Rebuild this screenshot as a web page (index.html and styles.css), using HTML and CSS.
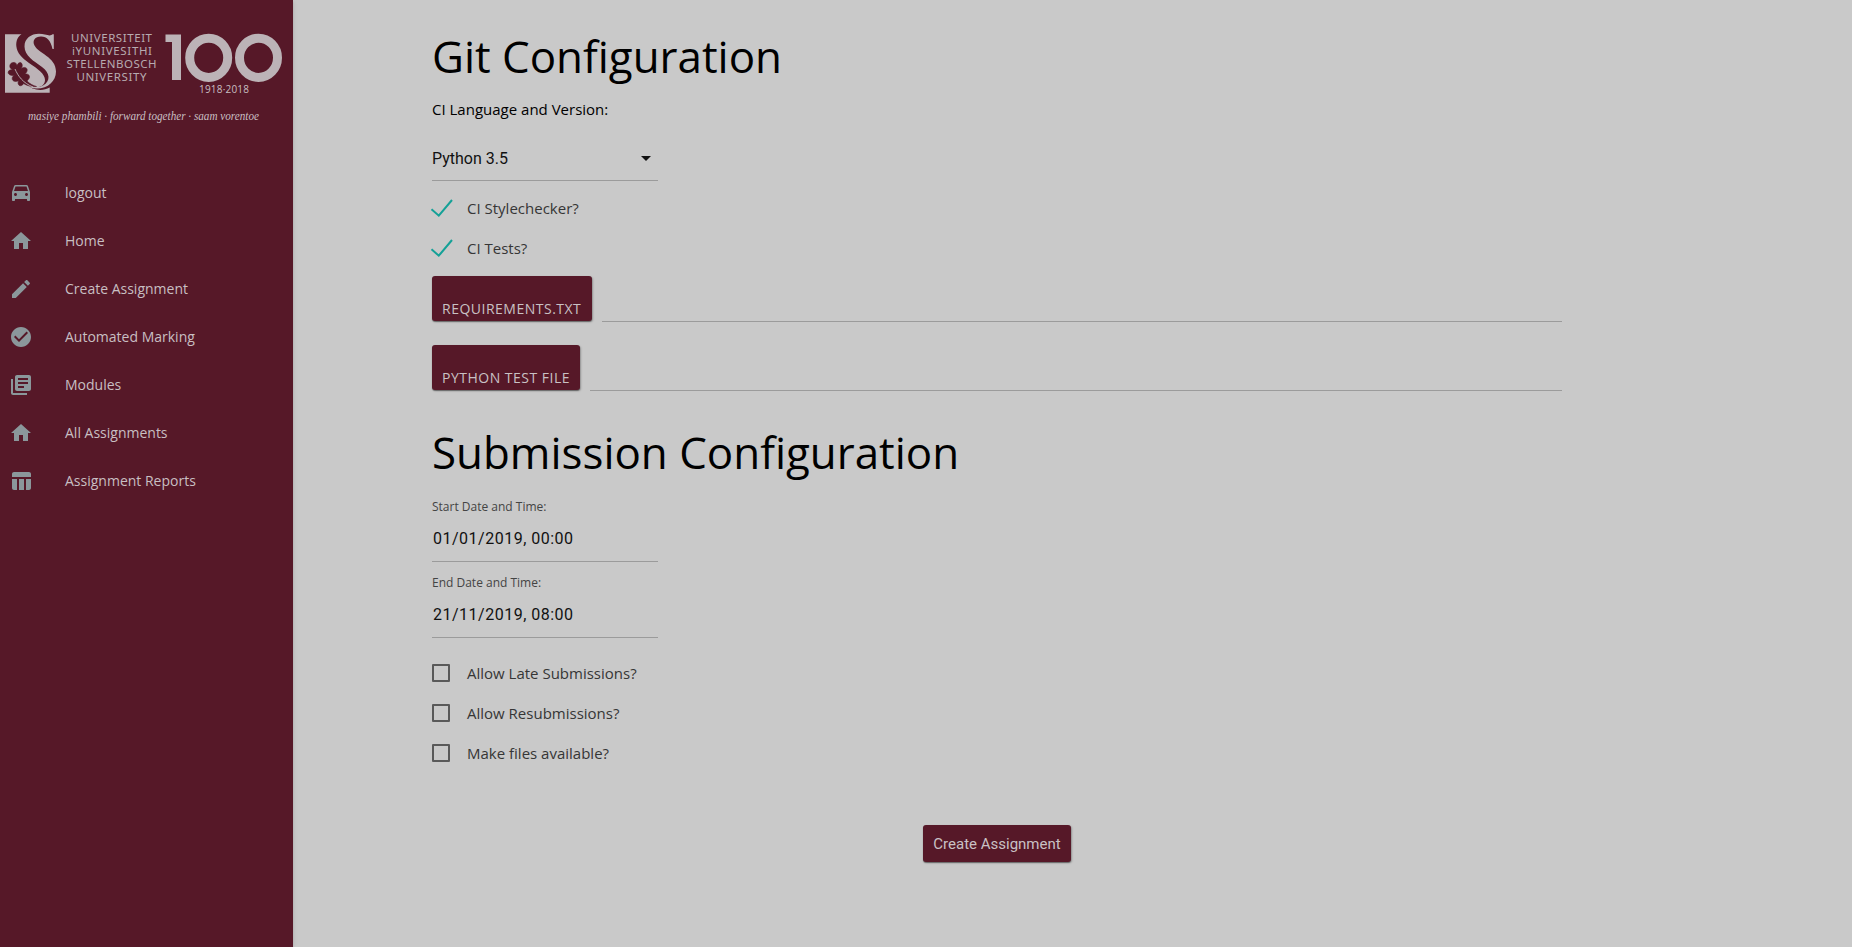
FILE: index.html
```
<!DOCTYPE html>
<html lang="en">
<head>
<meta charset="utf-8">
<title>Create Assignment</title>
<link rel="stylesheet" href="styles.css">
</head>
<body>
<div class="app">
  <aside class="sidebar">
    <svg class="logo" viewBox="0 0 293 169" role="img" aria-label="Stellenbosch University">
      <path class="mark" d="M5 34.300H21.500C17.500 37 16 41 16.300 46C17 53 22 58 29 63C38 69 45 74 45 80C45 83 43 86 39 87C34 88.500 29 86.500 26 84C32 90 42 92 49.700 87.500V92.700H5Z"/>
      <path class="mark" d="M53.800 34.300V49H52.500C51 41 47 36.500 41 36.500C35 36.500 32 40.500 34.500 45.500C38 53 56 57 56 71.500C56 81 48 88.500 37 88.500C32 88.500 28 87 25 84.500C31 87.500 38 88 43 85.500C51 81 50 73 42 67C34 61 24.500 56 24.500 46.500C24.500 38.500 31 33.800 39 33.800C45 33.800 50 37 52.500 34.300Z"/>
      <path class="leaf" d="M13 62.500c2.500-.5 3.500 1 4 3c1-3 4-4 5-1.500c.8 2-.3 3.500-.8 4.500c3-2 6-1 6 1.500c0 2-1.500 3-2.200 4c3.500-.5 5.500 2 4 4.500c-.8 1.300-1.500 1.700-2 2.500c3 3 6 4.500 9.500 5.500c-5 .5-10-1-13-3c-1 2.500-4 3-5 1c-.8-1.400-.3-2.700.2-3.700c-3 1.200-6.500.7-6.500-2.300c0-1.700 1-2.700 2.500-3c-3.500.5-7-1-6.500-3.500c.6-2.200 2.800-2.300 4.800-2.200c-3-1-4-3.500-2.500-5.800c1-1.200 1.700-1.300 2.500-1.500z"/>
      <path class="vein" d="M15 69C18 76 23 83 33 87"/>
      <g class="name">
        <text x="71" y="42" textLength="81">UNIVERSITEIT</text>
        <text x="72" y="55" textLength="80">iYUNIVESITHI</text>
        <text x="66.500" y="67.500" textLength="90">STELLENBOSCH</text>
        <text x="76.500" y="80.500" textLength="70">UNIVERSITY</text>
      </g>
      <path class="mark" d="M165.500 34.500H181V80H172V42H165.500Z"/>
      <ellipse class="zero" cx="208.700" cy="57.800" rx="19" ry="19.600"/>
      <ellipse class="zero" cx="258.500" cy="57.800" rx="19" ry="19.600"/>
      <text class="years" x="199" y="92.700" textLength="50">1918·2018</text>
      <text class="motto" x="28" y="120" textLength="231" lengthAdjust="spacingAndGlyphs">masiye phambili · forward together · saam vorentoe</text>
    </svg>
    <nav class="menu">
      <a class="item"><svg class="icon" viewBox="0 0 24 24"><path d="M18.920 5.010C18.720 4.420 18.160 4 17.500 4h-11c-.66 0-1.210.42-1.420 1.010L3 11v8c0 .55.45 1 1 1h1c.55 0 1-.45 1-1v-1h12v1c0 .55.45 1 1 1h1c.55 0 1-.45 1-1v-8l-2.080-5.990zM6.500 15c-.83 0-1.500-.67-1.500-1.500S5.670 12 6.500 12s1.500.67 1.500 1.500S7.330 15 6.500 15zm11 0c-.83 0-1.500-.67-1.500-1.500s.67-1.500 1.500-1.500 1.500.67 1.500 1.500-.67 1.500-1.500 1.500zM5 10l1.500-4.500h11L19 10H5z"/></svg><span>logout</span></a>
      <a class="item"><svg class="icon" viewBox="0 0 24 24"><path d="M10 20v-6h4v6h5v-8h3L12 3 2 12h3v8z"/></svg><span>Home</span></a>
      <a class="item"><svg class="icon" viewBox="0 0 24 24"><path d="M3 17.250V21h3.750L17.810 9.940l-3.750-3.750L3 17.250zM20.710 7.040c.39-.39.39-1.020 0-1.410l-2.340-2.340c-.39-.39-1.020-.39-1.410 0l-1.830 1.830 3.750 3.750 1.830-1.830z"/></svg><span>Create Assignment</span></a>
      <a class="item"><svg class="icon" viewBox="0 0 24 24"><path d="M12 2C6.480 2 2 6.480 2 12s4.480 10 10 10 10-4.480 10-10S17.520 2 12 2zm-2 15l-5-5 1.410-1.410L10 14.170l7.590-7.590L19 8l-9 9z"/></svg><span>Automated Marking</span></a>
      <a class="item"><svg class="icon" viewBox="0 0 24 24"><path d="M4 6H2v14c0 1.100.9 2 2 2h14v-2H4V6zm16-4H8c-1.100 0-2 .9-2 2v12c0 1.100.9 2 2 2h12c1.100 0 2-.9 2-2V4c0-1.100-.9-2-2-2zm-1 9H9V9h10v2zm-4 4H9v-2h6v2zm4-8H9V5h10v2z"/></svg><span>Modules</span></a>
      <a class="item"><svg class="icon" viewBox="0 0 24 24"><path d="M10 20v-6h4v6h5v-8h3L12 3 2 12h3v8z"/></svg><span>All Assignments</span></a>
      <a class="item"><svg class="icon" viewBox="0 0 24 24"><path d="M10 10.020h5V21h-5zM17 21h3c1.100 0 2-.9 2-2v-9h-5v11zm3-18H5c-1.100 0-2 .9-2 2v3h19V5c0-1.100-.9-2-2-2zM3 19c0 1.100.9 2 2 2h3V10H3v9z"/></svg><span>Assignment Reports</span></a>
    </nav>
  </aside>
  <main class="content">
    <h3 class="heading">Git Configuration</h3>
    <div class="caption">CI Language and Version:</div>
    <div class="select"><span>Python 3.5</span><svg class="caret" viewBox="0 0 24 24"><path d="M7 10l5 5 5-5z"/></svg></div>
    <div class="checks">
      <label class="check"><svg class="tick" viewBox="0 0 24 20"><path d="M1.500 11.300L8.800 17.700L22 2"/></svg>CI Stylechecker?</label>
      <label class="check"><svg class="tick" viewBox="0 0 24 20"><path d="M1.500 11.300L8.800 17.700L22 2"/></svg>CI Tests?</label>
    </div>
    <div class="file"><div class="btn file-btn req">REQUIREMENTS.TXT</div><div class="path"></div></div>
    <div class="file"><div class="btn file-btn test">PYTHON TEST FILE</div><div class="path"></div></div>
    <h3 class="heading second">Submission Configuration</h3>
    <div class="date"><div class="date-label">Start Date and Time:</div><div class="date-value">01/01/2019, 00:00</div></div>
    <div class="date"><div class="date-label">End Date and Time:</div><div class="date-value">21/11/2019, 08:00</div></div>
    <div class="options">
      <label class="check"><span class="box"></span>Allow Late Submissions?</label>
      <label class="check"><span class="box"></span>Allow Resubmissions?</label>
      <label class="check"><span class="box"></span>Make files available?</label>
    </div>
    <button class="btn submit">Create Assignment</button>
  </main>
</div>
</body>
</html>
```
FILE: styles.css
```
* { box-sizing: border-box; }
body { margin: 0; background: #c9c9c9; font-family: "Open Sans", sans-serif; font-size: 15px; color: #000; }
.app { display: flex; height: 947px; overflow: hidden; }
.sidebar { width: 293px; flex: none; background: #561828; box-shadow: 0 2px 2px rgba(0,0,0,.11), 0 1px 5px rgba(0,0,0,.1), 0 3px 1px -2px rgba(0,0,0,.16); }
.logo { display: block; width: 293px; height: 169px; }
.mark { fill: #bcb3b7; }
.leaf { fill: #561828; stroke: #561828; stroke-width: .6; }
.vein { fill: none; stroke: #bcb3b7; stroke-width: .9; }
.name { font: 11.500px "Noto Sans", sans-serif; fill: #b7abb0; }
.zero { fill: none; stroke: #bcb3b7; stroke-width: 9; }
.years { font: 10px "Open Sans", sans-serif; fill: #c8bfc2; }
.motto { font: italic 13px "Liberation Serif", serif; fill: #c8bfc2; }
.item { display: flex; align-items: center; gap: 32px; height: 48px; padding-left: 9px; font-size: 14px; color: #c8bfc2; }
.item span { padding-bottom: 2px; }
.icon { width: 24px; height: 24px; flex: none; fill: #8b979b; }
.content { width: 1130px; margin-left: 139px; display: flex; flex-direction: column; align-items: flex-start; }
.heading { margin: 28px 0 0; font-size: 43.900px; font-weight: 400; line-height: 56px; }
.caption { margin-top: 14px; line-height: 23px; }
.select { display: flex; align-items: center; justify-content: space-between; width: 226px; height: 45px; margin-top: 15px; border-bottom: 1px solid #9b9b9b; font: 16px "Roboto", sans-serif; color: #111; }
.caret { width: 24px; height: 24px; fill: #111; }
.checks { margin-top: 7px; }
.check { display: flex; align-items: center; height: 40px; color: #363636; }
.tick { width: 24px; height: 20px; margin: 0 13px 0 -2px; fill: none; stroke: #14a197; stroke-width: 2; }
.file { display: flex; align-items: flex-end; gap: 10px; width: 1130px; height: 46px; margin-bottom: 23px; }
.checks + .file { margin-top: 8px; }
.path { flex: 1; height: 46px; border-bottom: 1px solid #9b9b9b; }
.btn { background: #561828; color: #c9c1c4; border: 0; border-radius: 3px; box-shadow: 0 1px 1px rgba(0,0,0,.35), 1px 1px 2px rgba(0,0,0,.25); }
.file-btn { height: 45px; margin-bottom: 1px; padding: 22px 10px 0; font-size: 14px; line-height: 22px; letter-spacing: .5px; white-space: nowrap; }
.req { width: 160px; }
.test { width: 148px; }
.second { margin-top: 10px; }
.date { width: 226px; height: 76px; border-bottom: 1px solid #9b9b9b; }
.second + .date { margin-top: 6px; }
.date-label { padding-top: 12px; font-size: 12px; line-height: 18px; color: #444; }
.date-value { padding: 13px 0 0 1px; font: 16px/20px "Roboto", sans-serif; letter-spacing: .5px; color: #111; }
.options { margin-top: 15px; }
.box { width: 18px; height: 18px; margin-right: 17px; border: 2px solid #595959; border-radius: 1px; }
.submit { align-self: center; width: 148px; height: 37px; margin-top: 52px; padding: 0; font: 15px "Roboto", sans-serif; }
```
